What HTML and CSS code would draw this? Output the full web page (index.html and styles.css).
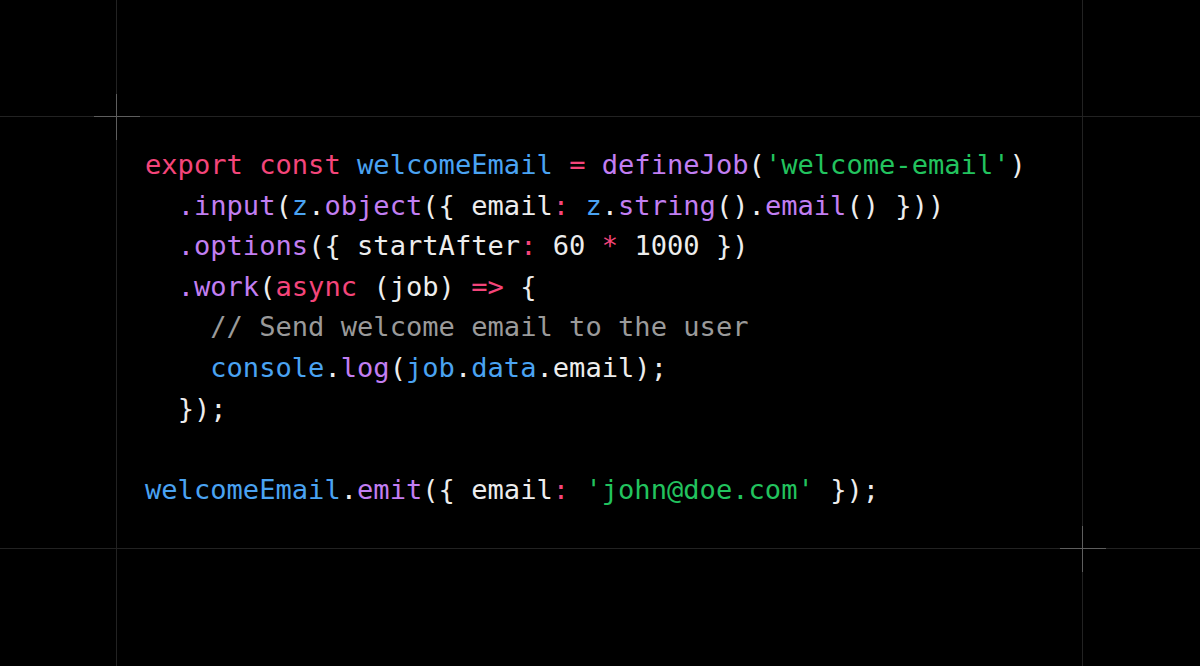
FILE: index.html
```html
<!DOCTYPE html>
<html>
<head>
<meta charset="utf-8">
<link rel="stylesheet" href="styles.css">
</head>
<body>
<div class="stage">
  <div class="vline vl1"></div>
  <div class="vline vl2"></div>
  <div class="hline hl1"></div>
  <div class="hline hl2"></div>
  <div class="panel">
<pre class="code"><span class="kw">export</span> <span class="kw">const</span> <span class="id">welcomeEmail</span> <span class="kw">=</span> <span class="fn">defineJob</span><span class="pn">(</span><span class="str">'welcome-email'</span><span class="pn">)</span>
  <span class="fn">.input</span><span class="pn">(</span><span class="id">z</span><span class="pn">.</span><span class="fn">object</span><span class="pn">({ email</span><span class="kw">:</span> <span class="id">z</span><span class="pn">.</span><span class="fn">string</span><span class="pn">().</span><span class="fn">email</span><span class="pn">() }))</span>
  <span class="fn">.options</span><span class="pn">({ startAfter</span><span class="kw">:</span> <span class="pn">60</span> <span class="kw">*</span> <span class="pn">1000 })</span>
  <span class="fn">.work</span><span class="pn">(</span><span class="kw">async</span> <span class="pn">(job)</span> <span class="kw">=&gt;</span> <span class="pn">{</span>
    <span class="cm">// Send welcome email to the user</span>
    <span class="id">console</span><span class="pn">.</span><span class="fn">log</span><span class="pn">(</span><span class="id">job</span><span class="pn">.</span><span class="id">data</span><span class="pn">.email);</span>
  <span class="pn">});</span>

<span class="id">welcomeEmail</span><span class="pn">.</span><span class="fn">emit</span><span class="pn">({ email</span><span class="kw">:</span> <span class="str">'john@doe.com'</span> <span class="pn">});</span></pre>
  </div>
  <div class="cross cross1"></div>
  <div class="cross cross2"></div>
</div>
</body>
</html>
```
FILE: styles.css
```css
html, body {
  margin: 0;
  padding: 0;
  background: #000;
}
.stage {
  position: relative;
  width: 1200px;
  height: 666px;
  overflow: hidden;
  display: grid;
  grid-template-columns: 116px 1px 965px 1px 1fr;
  grid-template-rows: 116px 1px 431px 1px 1fr;
}
.vline {
  background: #222;
  grid-row: 1 / -1;
}
.vl1 { grid-column: 2; }
.vl2 { grid-column: 4; }
.hline {
  background: #222;
  grid-column: 1 / -1;
}
.hl1 { grid-row: 2; }
.hl2 { grid-row: 4; }
.panel {
  grid-column: 3;
  grid-row: 3;
  padding: 28px 0 0 28px;
}
.code {
  margin: 0;
  font-family: "DejaVu Sans Mono", "Liberation Mono", monospace;
  font-size: 27.1px;
  line-height: 40.6px;
  color: #ededed;
  letter-spacing: 0;
}
.kw { color: #f4457a; }
.id { color: #4aa3f2; }
.fn { color: #c27ef2; }
.str { color: #22c35e; }
.pn { color: #ededed; }
.cm { color: #9a9a9a; }
.cross {
  position: absolute;
  width: 46px;
  height: 46px;
}
.cross::before, .cross::after {
  content: "";
  position: absolute;
  background: #5e5e5e;
}
.cross::before {
  left: 0;
  right: 0;
  top: 22px;
  height: 1px;
}
.cross::after {
  top: 0;
  bottom: 0;
  left: 22px;
  width: 1px;
}
.cross1 { left: 94px; top: 94px; }
.cross2 { left: 1060px; top: 526px; }
```
